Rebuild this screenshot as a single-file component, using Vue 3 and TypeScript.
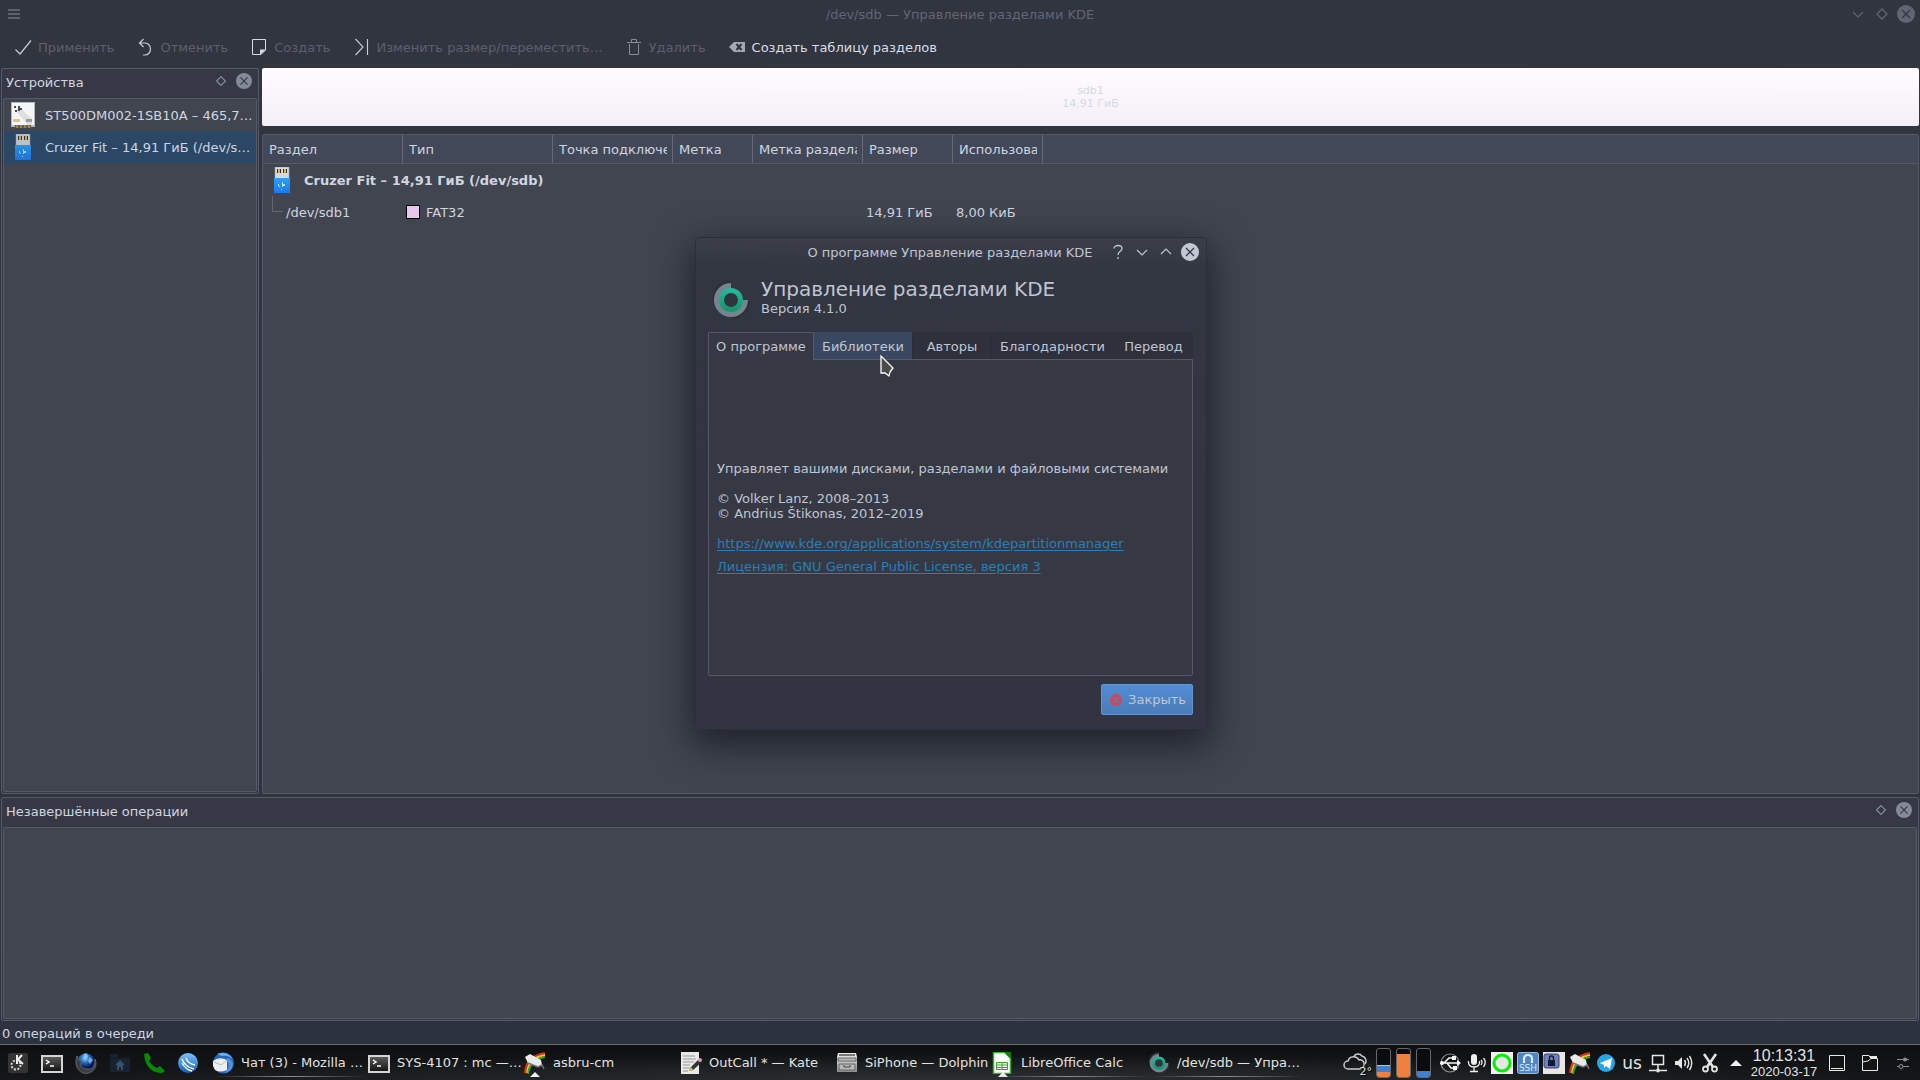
<script setup lang="ts">
import { ref } from 'vue'

interface Tool { icon: string; label: string; enabled: boolean }
interface Task { icon: string; label: string; mark?: 'line' | 'group' | 'both' }

const tools: Tool[] = [
  { icon: 'apply', label: 'Применить', enabled: false },
  { icon: 'undo', label: 'Отменить', enabled: false },
  { icon: 'new', label: 'Создать', enabled: false },
  { icon: 'resize', label: 'Изменить размер/переместить…', enabled: false },
  { icon: 'trash', label: 'Удалить', enabled: false },
  { icon: 'clear', label: 'Создать таблицу разделов', enabled: true },
]
const devices = [
  { icon: 'hdd', label: 'ST500DM002-1SB10A – 465,76 ГиБ (/dev/sda)' },
  { icon: 'usb-stick', label: 'Cruzer Fit – 14,91 ГиБ (/dev/sdb)' },
]
const selected = ref(1)
const columns = [
  { label: 'Раздел', width: 140 },
  { label: 'Тип', width: 150 },
  { label: 'Точка подключения', width: 120 },
  { label: 'Метка', width: 80 },
  { label: 'Метка раздела', width: 110 },
  { label: 'Размер', width: 90 },
  { label: 'Использовано', width: 90 },
]
const tabs = ['О программе', 'Библиотеки', 'Авторы', 'Благодарности', 'Перевод']
const activeTab = ref(0)
const hoveredTab = ref(1)
const launchers = [
  { icon: 'kmenu', label: 'Меню' },
  { icon: 'terminal', label: 'Терминал' },
  { icon: 'firefox', label: 'Firefox' },
  { icon: 'home', label: 'Домашняя папка' },
  { icon: 'phone', label: 'Телефон' },
  { icon: 'wave', label: 'Сеть' },
]
const tasks: Task[] = [
  { icon: 'thunderbird', label: 'Чат (3) - Mozilla Thunderbird', mark: 'line' },
  { icon: 'terminal', label: 'SYS-4107 : mc — Konsole' },
  { icon: 'asbru', label: 'asbru-cm', mark: 'group' },
  { icon: 'kate', label: 'OutCall * — Kate' },
  { icon: 'dolphin', label: 'SiPhone — Dolphin' },
  { icon: 'calc', label: 'LibreOffice Calc', mark: 'both' },
  { icon: 'partman', label: '/dev/sdb — Управление разделами KDE', mark: 'line' },
]
const meters = [
  [{ color: '#f08040', size: 5 }, { color: '#3f80d0', size: 6 }, { color: '#a8c4e8', size: 1 }],
  [{ color: '#f08040', size: 23 }],
  [{ color: '#3f80d0', size: 6 }],
]
const tray = [
  { icon: 'usb', label: 'Устройства' },
  { icon: 'mic', label: 'Микрофон' },
  { icon: 'ring', label: 'Состояние' },
  { icon: 'ssh', label: 'SSH' },
  { icon: 'lock', label: 'Блокировка' },
  { icon: 'asbru', label: 'asbru-cm' },
  { icon: 'telegram', label: 'Telegram' },
]
</script>

<template>
  <div class="screen">
    <svg class="defs" aria-hidden="true">
      <defs>
        <linearGradient id="g-usb" x2="0" y2="1"><stop stop-color="#2aa0f4" /><stop offset="1" stop-color="#1d78ee" /></linearGradient>
        <linearGradient id="g-green" x2="0" y2="1"><stop stop-color="#22b89a" /><stop offset="1" stop-color="#16966c" /></linearGradient>
        <linearGradient id="g-grey" x2="0" y2="1"><stop stop-color="#f0f0f0" /><stop offset="1" stop-color="#8c8c8c" /></linearGradient>
        <linearGradient id="g-dark" x2="0" y2="1"><stop stop-color="#5a5a5a" /><stop offset="1" stop-color="#151515" /></linearGradient>
        <radialGradient id="g-globe" cx=".45" cy=".25"><stop stop-color="#8fd0ff" /><stop offset=".5" stop-color="#2468b8" /><stop offset="1" stop-color="#071850" /></radialGradient>
        <linearGradient id="g-sky" x2="0" y2="1"><stop stop-color="#7cc0ff" /><stop offset="1" stop-color="#1462b8" /></linearGradient>
      </defs>
      <symbol id="apply" viewBox="0 0 22 22"><path d="M3.500 13.500L8 18L19 4.500" fill="none" stroke="#c6ccd8" stroke-width="1.200" /></symbol>
      <symbol id="undo" viewBox="0 0 22 22"><path d="M9.500 3L5.500 7L9.500 11M5.500 7H11A5.500 6 0 0 1 11 19H9" fill="none" stroke="#c6ccd8" stroke-width="1.200" /></symbol>
      <symbol id="new" viewBox="0 0 22 22"><path d="M4.500 3.500H17.500V14L13 18.500H4.500Z" fill="none" stroke="#d3dae3" /><path d="M12 19V13.500H18Z" fill="#d3dae3" /></symbol>
      <symbol id="resize" viewBox="0 0 22 22"><path d="M5.500 3L13 11L5.500 19M17.500 3V19" fill="none" stroke="#c6ccd8" stroke-width="1.100" /></symbol>
      <symbol id="trash" viewBox="0 0 22 22"><path d="M4 6.500H18M8.500 6V3.500H13.500V6M6.500 8V18.500H15.500V8" fill="none" stroke="#878c98" /></symbol>
      <symbol id="clear" viewBox="0 0 22 22"><path d="M3 11L8 6H19V16H8Z" fill="#a3a8b5" /><path d="M10.500 8L15.500 14M15.500 8L10.500 14" stroke="#30343f" stroke-width="2" /></symbol>
      <symbol id="menu" viewBox="0 0 14 12"><path d="M1 2H13M1 6H13M1 10H13" stroke="#5c616e" stroke-width="2" /></symbol>
      <symbol id="down" viewBox="0 0 18 18"><path d="M4 7L9 12L14 7" fill="none" stroke="currentColor" stroke-width="1.200" /></symbol>
      <symbol id="up" viewBox="0 0 18 18"><path d="M4 11L9 6L14 11" fill="none" stroke="currentColor" stroke-width="1.200" /></symbol>
      <symbol id="help" viewBox="0 0 18 18"><path d="M5 5.500C5 1.500 13 1.500 13 5.500C13 8.500 9 8 9 12M9 14V16" fill="none" stroke="currentColor" stroke-width="1.300" /></symbol>
      <symbol id="diamond" viewBox="0 0 18 18"><path d="M9 4L14 9L9 14L4 9Z" fill="none" stroke="currentColor" stroke-width="1.300" /></symbol>
      <symbol id="close" viewBox="0 0 18 18"><circle cx="9" cy="9" r="9" fill="currentColor" /><path d="M5 5L13 13M13 5L5 13" stroke="#343844" stroke-width="1.300" /></symbol>
      <symbol id="hdd" viewBox="0 0 26 26"><path d="M1 0H25V25H1Z" fill="#b4b8ba" /><path d="M2 1H24V23H2Z" fill="#f4f5f5" /><path d="M9 5L22 17V23H18L6 9Z" fill="#dedfdf" /><path d="M5 23H21V26H5Z" fill="#705a3a" /><path d="M7 23V26M11 23V26M15 23V26M19 23V26" stroke="#c8b070" /><path d="M3 17H10V20H3Z" fill="#f4c060" /><path d="M16 17H22V20H16Z" fill="#9a9c9e" /><path d="M4 4H6V6H4ZM8 4H10V6H12V8H10V9H8ZM5 8H7V10H5Z" fill="#45484b" /></symbol>
      <symbol id="usb-stick" viewBox="0 0 26 26"><path d="M6 0H20V12H6Z" fill="#d3d8da" stroke="#9ba8b2" stroke-width=".5" /><path d="M8 2H9V6H8ZM11 2H12V6H11ZM14 2H15V6H14ZM17 2H18V6H17Z" fill="#303438" /><path d="M9 2H11V6H9ZM15 2H17V6H15Z" fill="#f0ac3c" /><path d="M5 11H21V26H5Z" fill="url(#g-usb)" /><path d="M9 17H10V19H9ZM13 15H14V17H16V19H14V20H13ZM10 19H11V20H10ZM12 22H13V23H12Z" fill="#b8e0ff" /></symbol>
      <symbol id="partman" viewBox="0 0 38 40"><path d="M19 0A19 19 0 0 0 0 19H8L19 8ZM38 21A19 19 0 0 1 19 40V32L30 21Z" fill="#2f3135" /><path d="M19 3A17 17 0 1 0 36 20H19Z" fill="#75858f" /><circle cx="19" cy="20" r="9.500" fill="#30343f" stroke="url(#g-green)" stroke-width="5" /></symbol>
      <symbol id="error" viewBox="0 0 12 12"><circle cx="6" cy="6" r="6" fill="#cf4858" /><path d="M3 3L9 9M9 3L3 9" stroke="#5a80bc" stroke-width="1.100" /></symbol>
      <symbol id="kmenu" viewBox="0 0 22 22"><rect x="1" y="1" width="20" height="20" rx="2" fill="#343434" /><circle cx="9" cy="13" r="4.500" fill="none" stroke="#d8d8d8" stroke-width="2" stroke-dasharray="2 1.500" /><path d="M10 3V12M15 3L11 7.500L16 12" fill="none" stroke="#eee" stroke-width="2" /></symbol>
      <symbol id="terminal" viewBox="0 0 22 22"><path d="M0 3H22V21H0Z" fill="#d4d4d4" /><path d="M2 5H20V19H2Z" fill="url(#g-dark)" /><path d="M5 8L8 10L5 12M9 14H13" fill="none" stroke="#fff" stroke-width="1.500" /></symbol>
      <symbol id="firefox" viewBox="0 0 22 22"><circle cx="11" cy="11" r="9.500" fill="url(#g-globe)" /><path d="M2 4C-1 11 2 21 11 21.500C19 21 23 14 20 7C20 14 18 18 12 17C7 17 4 13 7 9C4 9 3 7 2 4Z" fill="#3c3e42" stroke="#6d7076" stroke-width=".8" /><path d="M8 2L12 1L13 5L10 7ZM15 5L18 8L15 12L13 9Z" fill="#8fd0ff" opacity=".7" /></symbol>
      <symbol id="home" viewBox="0 0 22 22"><path d="M1 2H9V5H21V20H1Z" fill="#182230" /><path d="M1 6H21" stroke="#0d141e" /><path d="M11 8L16 13H14V18H12V15H10V18H8V13H6Z" fill="#36506c" /></symbol>
      <symbol id="phone" viewBox="0 0 22 22"><path d="M1 2L5 1L8 6L6 9Q9 14 14 16L17 14L22 19L19 21Q6 21 2 8Z" fill="#078a07" /></symbol>
      <symbol id="wave" viewBox="0 0 22 22"><circle cx="11" cy="11" r="10" fill="url(#g-sky)" /><path d="M5 7Q8 15 17 17M9 6Q11 12 18 13M5 11Q9 18 15 19" fill="none" stroke="#fff" stroke-width="1.300" /></symbol>
      <symbol id="thunderbird" viewBox="0 0 22 22"><circle cx="11.500" cy="11" r="10.500" fill="#2864b8" /><path d="M5 2Q16-2 21 8Q17 3 10 4Z" fill="#62b0f0" /><path d="M1 9Q7 4 15 8L15 18Q8 21 3 18L1 14Z" fill="#eceff2" /><path d="M2 10L9 13L15 8" fill="none" stroke="#b0bac6" /><path d="M15 9Q20 15 12 21Q20 20 21 12Q20 7 15 6Z" fill="#4f93df" /></symbol>
      <symbol id="asbru" viewBox="0 0 22 22"><path d="M1 21Q2 4 21 1" fill="none" stroke="#e22b20" stroke-width="2" /><path d="M3 21Q4 6 21 3" fill="none" stroke="#f8c820" stroke-width="2" /><path d="M4 22Q6 8 21 5" fill="none" stroke="#28a440" stroke-width="2" /><path d="M1 5L6 2L17 8L18 13L14 15L4 11Z" fill="#e9eaea" /><path d="M4 11L14 15L18 13L20 17" fill="none" stroke="#777" stroke-width="1.500" /></symbol>
      <symbol id="kate" viewBox="0 0 22 22"><path d="M1 0H19V22H1Z" fill="#e8e8e6" /><path d="M3 4H15M3 7H16M3 10H14M3 13H10M3 16H10M3 19H8" stroke="#999" /><path d="M18 8L21 11L13 18L9 19L11 15Z" fill="#343434" /><path d="M9 19L11 15L13 18Z" fill="#d8c850" /><circle cx="20" cy="8" r="2" fill="#d89ab4" /></symbol>
      <symbol id="dolphin" viewBox="0 0 22 22"><path d="M2 1H20L21 5V20H1V5Z" fill="url(#g-grey)" /><path d="M2 6H20V9H2ZM3 12H19V18H3Z" fill="#b8b8b8" stroke="#555" stroke-width=".8" /><path d="M3 3H19" stroke="#555" stroke-width="1.500" /><path d="M8 13V15H14V13" fill="none" stroke="#444" /></symbol>
      <symbol id="calc" viewBox="0 0 22 22"><path d="M1.500.500H13L18.500 6V21.500H1.500Z" fill="#fff" stroke="#2fb420" stroke-width="1.500" /><path d="M12 0H19V7Z" fill="#157c0c" /><path d="M4.500 10.500H15.500V17.500H4.500ZM4.500 13H15.500M4.500 15.500H15.500M10 10V18" fill="none" stroke="#38a428" /></symbol>
      <symbol id="weather" viewBox="0 0 30 22"><path d="M6 17A4 4 0 0 1 6 9A6 6 0 0 1 17 8A4 4 0 0 1 19 16L18 17Z" fill="none" stroke="#c8cacb" stroke-width="1.500" /><path d="M12 4A5 5 0 0 1 20 4A5 5 0 0 1 23 12" fill="none" stroke="#c8cacb" stroke-width="1.500" /></symbol>
      <symbol id="usb" viewBox="0 0 22 22"><circle cx="11" cy="11" r="9" fill="none" stroke="#8c8e90" stroke-width="1.200" /><path d="M2 11H20M5 11L10 6H14M8 11L12 16H15" fill="none" stroke="#f4f4f4" stroke-width="1.600" /><circle cx="3" cy="11" r="2" fill="#fff" /><path d="M18 8L22 11L18 14ZM13 4H17V8H13ZM14 14H18V18H14Z" fill="#fff" /></symbol>
      <symbol id="mic" viewBox="0 0 22 22"><rect x="6" y="2" width="6" height="11" rx="3" fill="#eee" /><path d="M3.500 9Q3 15 9 15Q15 15 14.500 9M9 15V19M5 19.500H13M16 8Q18 10 16 13M18.500 6Q22 10 18.500 15" fill="none" stroke="#eee" stroke-width="1.300" /></symbol>
      <symbol id="ring" viewBox="0 0 22 22"><path d="M0 0H22V22H0Z" fill="#f4eef2" /><circle cx="11" cy="11" r="8" fill="#e6e6e6" stroke="#00f400" stroke-width="3" /></symbol>
      <symbol id="ssh" viewBox="0 0 22 22"><rect x=".5" y=".5" width="21" height="21" rx="2" fill="#4f86c4" stroke="#98bce0" /><path d="M7 11V7Q7 3 11 3Q15 3 15 7V11" fill="none" stroke="#d9eaff" stroke-width="2.200" /><text x="11" y="19" text-anchor="middle" font-family="DejaVu Sans" font-size="9" fill="#d0eaff">SSH</text></symbol>
      <symbol id="lock" viewBox="0 0 22 22"><path d="M0 0H22V22H0Z" fill="#e9e7e3" /><rect x="1" y="2" width="15" height="14" rx="2" fill="#7082b8" stroke="#34426c" /><path d="M5 8H12V14H5Z" fill="#111a38" /><path d="M6.500 8V6Q6.500 4 8.500 4Q10.500 4 10.500 6V8" fill="none" stroke="#111a38" stroke-width="1.400" /></symbol>
      <symbol id="telegram" viewBox="0 0 22 22"><circle cx="11" cy="11" r="9" fill="#28a4e8" /><path d="M5 11L17 6L15 17L11 14L9 16V13Z" fill="#fff" /></symbol>
      <symbol id="network" viewBox="0 0 22 22"><path d="M5.500 3.500H16.500V12.500H5.500ZM11 13V18M2 18.500H9M13 18.500H20" fill="none" stroke="#e6e6e6" stroke-width="1.500" /><circle cx="11" cy="18.500" r="2" fill="#e6e6e6" /></symbol>
      <symbol id="volume" viewBox="0 0 22 22"><path d="M2 9H5L9 5V17L5 13H2Z" fill="#e6e6e6" /><path d="M11.500 8Q13.500 11 11.500 14M14 6Q17.500 11 14 16M16.500 4Q21 11 16.500 18" fill="none" stroke="#e6e6e6" stroke-width="1.400" /></symbol>
      <symbol id="cut" viewBox="0 0 22 22"><path d="M5 2L14 15M17 2L8 15" stroke="#e2e2e2" stroke-width="2.600" /><circle cx="6.500" cy="17" r="2.500" fill="none" stroke="#e2e2e2" stroke-width="1.800" /><circle cx="15.500" cy="17" r="2.500" fill="none" stroke="#e2e2e2" stroke-width="1.800" /></symbol>
      <symbol id="expand" viewBox="0 0 22 22"><path d="M5 14L11 8L17 14Z" fill="#f2f2f2" /></symbol>
      <symbol id="desktop" viewBox="0 0 22 22"><path d="M3.500 3.500H18.500V18.500H3.500ZM5 16.500H17" fill="none" stroke="#e8e8e8" /></symbol>
      <symbol id="folder" viewBox="0 0 22 22"><path d="M3.500 18.500V3.500H10L12 6.500H18.500V18.500ZM3.500 10L9 9L12 6.500" fill="none" stroke="#e8e8e8" /><path d="M10 4H18V7H12Z" fill="#e8e8e8" /></symbol>
      <symbol id="sliders" viewBox="0 0 22 22"><path d="M5 7.500H17M5 14.500H17" stroke="#8b8d8f" /><circle cx="13" cy="7.500" r="2" fill="#8b8d8f" /><circle cx="9" cy="14.500" r="2" fill="#1a1c1d" stroke="#8b8d8f" /></symbol>
    </svg>

    <div class="window">
      <header class="titlebar">
        <button class="menu-btn" aria-label="Меню окна"><svg width="14" height="12"><use href="#menu" /></svg></button>
        <h1>/dev/sdb — Управление разделами KDE</h1>
        <div class="controls">
          <button aria-label="Свернуть"><svg width="18" height="18"><use href="#down" /></svg></button>
          <button aria-label="Восстановить"><svg width="18" height="18"><use href="#diamond" /></svg></button>
          <button aria-label="Закрыть окно"><svg width="18" height="18"><use href="#close" /></svg></button>
        </div>
      </header>

      <nav class="toolbar">
        <button v-for="t in tools" :key="t.icon" :disabled="!t.enabled">
          <svg width="22" height="22"><use :href="'#' + t.icon" /></svg>{{ t.label }}
        </button>
      </nav>

      <div class="workspace">
        <aside class="dock">
          <div class="dock-head">
            <h2>Устройства</h2>
            <button aria-label="Открепить"><svg width="16" height="16"><use href="#diamond" /></svg></button>
            <button aria-label="Закрыть панель"><svg width="16" height="16"><use href="#close" /></svg></button>
          </div>
          <ul class="dock-body">
            <li v-for="(d, i) in devices" :key="d.icon" :class="{ selected: i === selected }" @click="selected = i">
              <svg width="26" height="26"><use :href="'#' + d.icon" /></svg>
              <span>{{ d.label }}</span>
            </li>
          </ul>
        </aside>

        <main>
          <div class="disk-bar"><span>sdb1</span><span>14,91 ГиБ</span></div>
          <div class="table-frame">
            <table>
              <colgroup>
                <col v-for="c in columns" :key="c.label" :style="{ width: c.width + 'px' }" />
                <col />
              </colgroup>
              <thead>
                <tr>
                  <th v-for="c in columns" :key="c.label" scope="col"><div>{{ c.label }}</div></th>
                  <td></td>
                </tr>
              </thead>
              <tbody>
                <tr class="device">
                  <th colspan="8"><div><svg width="26" height="26"><use href="#usb-stick" /></svg>Cruzer Fit – 14,91 ГиБ (/dev/sdb)</div></th>
                </tr>
                <tr>
                  <td><div class="branch"><i></i>/dev/sdb1</div></td>
                  <td><div class="fs"><i></i>FAT32</div></td>
                  <td></td><td></td><td></td>
                  <td>14,91 ГиБ</td>
                  <td>8,00 КиБ</td>
                  <td></td>
                </tr>
              </tbody>
            </table>
          </div>
        </main>
      </div>

      <section class="dock pending">
        <div class="dock-head">
          <h2>Незавершённые операции</h2>
          <button aria-label="Открепить"><svg width="16" height="16"><use href="#diamond" /></svg></button>
          <button aria-label="Закрыть панель"><svg width="16" height="16"><use href="#close" /></svg></button>
        </div>
        <div class="dock-body"></div>
      </section>
      <footer>0 операций в очереди</footer>
    </div>

    <section class="dialog" role="dialog" aria-labelledby="about-title">
      <header class="dialog-bar">
        <span></span>
        <h2 id="about-title">О программе Управление разделами KDE</h2>
        <div class="controls">
          <button aria-label="Справка"><svg width="18" height="18"><use href="#help" /></svg></button>
          <button aria-label="Свернуть"><svg width="18" height="18"><use href="#down" /></svg></button>
          <button aria-label="Развернуть"><svg width="18" height="18"><use href="#up" /></svg></button>
          <button aria-label="Закрыть диалог"><svg width="18" height="18"><use href="#close" /></svg></button>
        </div>
      </header>
      <div class="about-head">
        <svg width="38" height="40"><use href="#partman" /></svg>
        <div>
          <h3>Управление разделами KDE</h3>
          <p>Версия 4.1.0</p>
        </div>
      </div>
      <div class="tabs" role="tablist">
        <button v-for="(t, i) in tabs" :key="t" role="tab" :aria-selected="i === activeTab"
          :class="{ active: i === activeTab, hovered: i === hoveredTab }" @click="activeTab = i">{{ t }}</button>
      </div>
      <div class="pane" role="tabpanel">
        <p>Управляет вашими дисками, разделами и файловыми системами</p>
        <p>© Volker Lanz, 2008–2013<br />© Andrius Štikonas, 2012–2019</p>
        <a href="https://www.kde.org/applications/system/kdepartitionmanager">https://www.kde.org/applications/system/kdepartitionmanager</a>
        <a href="#license">Лицензия: GNU General Public License, версия 3</a>
      </div>
      <div class="actions">
        <button><svg width="12" height="12"><use href="#error" /></svg>Закрыть</button>
      </div>
      <svg class="cursor" width="16" height="24" viewBox="0 0 16 24" aria-hidden="true"><path d="M1 1V18H5L9 21L10 17L13 13Z" fill="#4b4b49" stroke="#fff" stroke-width="1.300" /></svg>
    </section>

    <div class="taskbar">
      <div class="launchers">
        <button v-for="l in launchers" :key="l.icon" :aria-label="l.label"><svg width="22" height="22"><use :href="'#' + l.icon" /></svg></button>
      </div>
      <div class="tasks">
        <button v-for="t in tasks" :key="t.label" :class="t.mark">
          <svg width="22" height="22"><use :href="'#' + t.icon" /></svg><span>{{ t.label }}</span>
        </button>
      </div>
      <div class="tray">
        <div class="weather"><svg width="30" height="22"><use href="#weather" /></svg><span>2°</span></div>
        <div class="meters">
          <div v-for="(m, i) in meters" :key="i" class="meter">
            <i v-for="s in m" :key="s.color" :style="{ height: s.size + 'px', background: s.color }"></i>
          </div>
        </div>
        <div class="tray-icons">
          <button v-for="t in tray" :key="t.icon" :aria-label="t.label"><svg width="22" height="22"><use :href="'#' + t.icon" /></svg></button>
          <button class="layout">us</button>
          <button aria-label="Сеть"><svg width="22" height="22"><use href="#network" /></svg></button>
          <button aria-label="Громкость"><svg width="22" height="22"><use href="#volume" /></svg></button>
          <button aria-label="Буфер обмена"><svg width="22" height="22"><use href="#cut" /></svg></button>
          <button aria-label="Показать скрытые"><svg width="22" height="22"><use href="#expand" /></svg></button>
        </div>
        <div class="clock"><time class="time">10:13:31</time><time>2020-03-17</time></div>
        <div class="corner">
          <button aria-label="Рабочий стол"><svg width="22" height="22"><use href="#desktop" /></svg></button>
          <button aria-label="Папка"><svg width="22" height="22"><use href="#folder" /></svg></button>
          <button aria-label="Настройка панели"><svg width="22" height="22"><use href="#sliders" /></svg></button>
        </div>
      </div>
    </div>
  </div>
</template>

<style>
html, body { background: #30343f; }
</style>

<style scoped>
.screen {
  position: relative;
  display: flex;
  flex-direction: column;
  min-height: 100vh;
  overflow: hidden;
  color: #d0d5e0;
  font: 13px/15px "DejaVu Sans", sans-serif;
}
.defs { position: absolute; width: 0; height: 0; }
h1, h2, h3, p, ul { margin: 0; padding: 0; font: inherit; }
svg { display: block; flex: none; }
button { margin: 0; padding: 0; border: 0; background: none; color: inherit; font: inherit; white-space: nowrap; }

.window { flex: 1; display: flex; flex-direction: column; background: linear-gradient(#31353f, #30343f 90%, #2d3240); }
.titlebar, .dialog-bar { display: grid; grid-template-columns: 1fr auto 1fr; align-items: center; }
.titlebar { height: 28px; padding: 0 2px; color: #616673; }
.menu-btn { justify-self: start; margin-left: 5px; }
.controls { display: flex; justify-self: end; }
.controls button { width: 24px; display: grid; place-items: center; }
.toolbar { display: flex; align-items: center; gap: 20px; box-sizing: border-box; height: 40px; padding: 0 0 2px 12px; }
.toolbar button { display: flex; align-items: center; gap: 4px; color: #d8dde6; }
.toolbar button:disabled { color: #5b606c; }

.workspace { flex: 1; display: flex; gap: 3px; padding: 0 1px; }
.dock { box-sizing: border-box; display: flex; flex-direction: column; border: 1px solid #565a67; border-radius: 2px; background: #363945; padding: 0 1px 1px; }
aside.dock { width: 258px; }
.dock-head { display: flex; align-items: center; gap: 7px; box-sizing: border-box; height: 29px; padding: 0 5px 2px 3px; }
.dock-head h2 { flex: 1; }
.dock-head button { color: #858a97; padding-bottom: 3px; }
.dock-body { flex: 1; border: 1px solid #565a67; border-radius: 2px; background: #404550; list-style: none; }
.dock-body li { display: flex; align-items: center; gap: 9px; height: 32px; padding-left: 6px; }
.dock-body li svg { margin-bottom: 1px; }
.dock-body li span { flex: 1; min-width: 0; overflow: hidden; white-space: nowrap; text-overflow: ellipsis; }
.dock-body li.selected { background: #2a4765; }
li.selected svg { opacity: .85; }

main { flex: 1; min-width: 0; display: flex; flex-direction: column; gap: 8px; }
.disk-bar { display: flex; flex-direction: column; align-items: center; justify-content: center; height: 58px; border-radius: 2px; background: linear-gradient(#fffbff, #f4eff6); color: #d3dae5; font-size: 11px; line-height: 13px; }
.table-frame { flex: 1; border: 1px solid #565a67; border-radius: 2px; background: #404550; }
table { width: 100%; table-layout: fixed; border-collapse: separate; border-spacing: 0; }
thead tr { height: 29px; }
thead th, thead td { box-sizing: border-box; height: 29px; padding: 0 5px 0 6px; background: #424857; border-bottom: 1px solid #565a67; font-weight: normal; text-align: left; }
thead th { border-right: 1px solid #656a76; }
thead th div { overflow: hidden; white-space: nowrap; }
tbody td, tbody th { box-sizing: border-box; height: 32px; padding: 0 3px; white-space: nowrap; text-align: left; }
.device div { display: flex; align-items: center; gap: 9px; padding-left: 3px; }
.branch, .fs { display: flex; align-items: center; }
.branch { gap: 3px; padding-left: 6px; }
.branch i { width: 11px; height: 16px; margin-bottom: 16px; box-sizing: border-box; border: solid #626773; border-width: 0 0 1px 1px; }
.fs { gap: 6px; }
.fs i { box-sizing: border-box; width: 14px; height: 14px; border: 1px solid #000; background: #e6c8ef; }

.pending { height: 224px; margin: 3px 1px 0; }
footer { display: flex; align-items: center; box-sizing: border-box; height: 23px; padding: 2px 0 0 2px; }

.dialog {
  position: absolute;
  left: 695px;
  top: 237px;
  box-sizing: border-box;
  width: 512px;
  padding: 0 13px 14px 12px;
  border: 1px solid #2c2f3a;
  border-radius: 4px;
  background: linear-gradient(#3b3e49, #323641 32px, #323541);
  color: #bfc5d2;
  box-shadow: 0 12px 36px 4px rgba(16, 17, 24, .65);
}
.dialog-bar { height: 28px; margin: 0 -9px 0 -10px; }
.dialog-bar .controls button:last-child { color: #c2c7d4; }
.about-head { display: flex; align-items: center; gap: 11px; box-sizing: border-box; height: 66px; padding-bottom: 2px; }
.about-head svg { margin-left: 4px; margin-top: 4px; }
.about-head div { margin-bottom: 4px; }
.about-head h3 { font-size: 20px; line-height: 24px; }
.tabs { display: flex; align-items: flex-start; height: 28px; }
.tabs button { flex: 1 0 auto; min-width: 79px; height: 27px; box-sizing: border-box; padding: 1px 8px 0; border-right: 1px solid #2b2e39; background: #2e303c; }
.tabs button:last-child { border-right: 0; }
.tabs button.active { position: relative; z-index: 1; height: 28px; border: 1px solid #565a67; border-bottom: 0; border-radius: 2px 2px 0 0; background: #363945; padding: 0 7px; }
.tabs button.hovered { background: #394760; }
.pane { display: flex; flex-direction: column; align-items: flex-start; gap: 15px; box-sizing: border-box; height: 317px; margin-top: -1px; padding: 101px 8px 0; border: 1px solid #565a67; border-radius: 0 0 2px 2px; background: #363944; }
.pane a { color: #2a7fb8; text-underline-offset: 2px; }
.pane a + a { margin-top: -7px; }
.actions { display: flex; justify-content: flex-end; margin-top: 8px; }
.actions button { display: flex; align-items: center; gap: 6px; box-sizing: border-box; height: 31px; padding: 0 6px 0 8px; border: 1px solid #6494d2; border-radius: 2px; background: linear-gradient(#528cd4, #4b7db8); }
.cursor { position: absolute; left: 184px; top: 117px; z-index: 2; }

.taskbar { display: flex; align-items: center; height: 36px; box-sizing: border-box; border-top: 1px solid #6a6c6e; background: radial-gradient(ellipse 900px 26px at 50% 100%, #2c3033, rgba(20, 21, 22, 0)), linear-gradient(#0d0f10, #151718); color: #e2e2e2; }
.taskbar button { display: grid; place-items: center; }
.launchers { display: flex; gap: 12px; padding-left: 7px; }
.tasks { display: flex; flex: 1; min-width: 0; padding-left: 13px; }
.tasks button { position: relative; display: flex; align-items: center; gap: 7px; width: 156px; height: 34px; box-sizing: border-box; }
.tasks span { min-width: 0; flex: 1; text-align: left; overflow: hidden; text-overflow: ellipsis; }
.tasks .line::after, .tasks .both::after { content: ""; position: absolute; left: 0; right: 0; bottom: 3px; height: 1px; background: linear-gradient(90deg, transparent, #8c8e90, transparent); }
.tasks .group::before, .tasks .both::before { content: ""; position: absolute; left: 6px; bottom: 3px; border: 5px solid transparent; border-top: 0; border-bottom-color: #eee; }
.tray { display: flex; align-items: center; }
.weather { position: relative; width: 34px; }
.weather span { position: absolute; right: 4px; bottom: -5px; font-size: 11px; text-shadow: 0 0 2px #000, 1px 1px #000; }
.meters { display: flex; gap: 5px; }
.meter { box-sizing: border-box; display: flex; flex-direction: column-reverse; width: 15px; height: 30px; border: 1px solid #66686a; border-radius: 3px; overflow: hidden; background: #0b0c0d; }
.tray-icons { display: flex; align-items: center; gap: 4px; padding-left: 8px; }
.layout { width: 22px; font-size: 17px; line-height: 22px; }
.clock { display: flex; flex-direction: column; align-items: center; width: 66px; margin-left: 4px; white-space: nowrap; font: 13px/15px "Liberation Sans", sans-serif; }
.time { font-size: 16px; line-height: 17px; }
.corner { display: flex; gap: 11px; padding: 0 6px 0 9px; }
</style>
